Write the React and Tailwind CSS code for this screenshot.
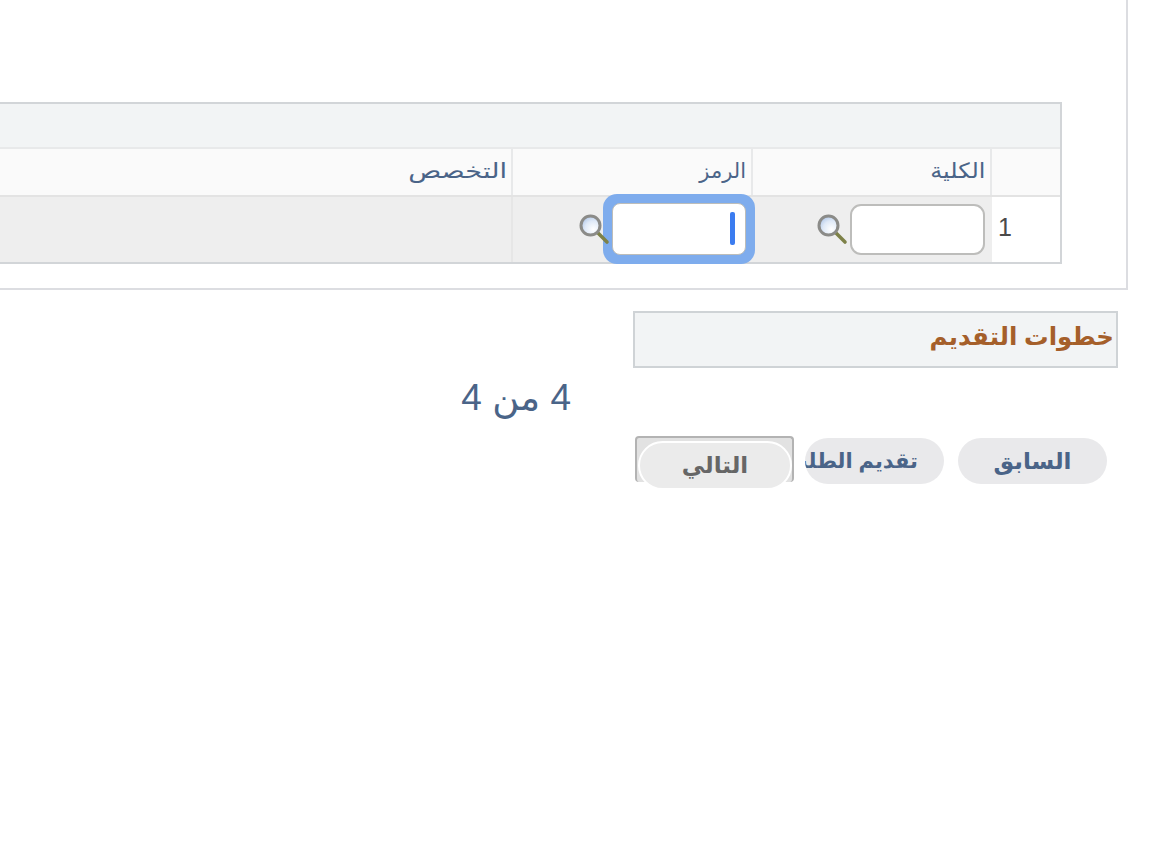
import React from "react";

const arabic = "font-['Liberation_Sans','DejaVu_Sans',sans-serif]";

function Magnifier({ className }) {
  return (
    <svg viewBox="0 0 32 32" className={className} aria-hidden="true">
      <defs>
        <radialGradient id="lens" cx="0.65" cy="0.7" r="0.8">
          <stop offset="0" stopColor="#ffffff" />
          <stop offset="0.55" stopColor="#dfe9f7" />
          <stop offset="1" stopColor="#a9c2e6" />
        </radialGradient>
      </defs>
      <path d="M19.5 19.5 L29 29" stroke="#7d8148" strokeWidth="3.6" strokeLinecap="round" />
      <circle cx="12.5" cy="12.5" r="9.5" fill="url(#lens)" stroke="#8b8b88" strokeWidth="3" />
    </svg>
  );
}

function SearchField({ focused }) {
  return (
    <div className={focused ? "relative z-10 ml-[2px] -mt-[2px] flex w-full shrink-0 items-center" : "-mt-[1px] flex w-full items-center gap-[2px] pr-[7px]"} dir="rtl">
      {focused ? (
        <div className="h-[70px] w-[152px] shrink-0 rounded-[14px] bg-[#7eaced] p-[9px]">
          <div className="flex h-full items-center rounded-[8px] border border-[#bdbdb9] bg-white pr-[10px]">
            <div className="h-[33px] w-[5px] rounded-[2px] bg-[#3b7cf0]" />
          </div>
        </div>
      ) : (
        <div className="h-[51px] w-[135px] shrink-0 rounded-[11px] border-2 border-[#bdbdbb] bg-white" />
      )}
      <Magnifier className={focused ? "-mr-[7px] h-[32px] w-[32px]" : "h-[32px] w-[32px]"} />
    </div>
  );
}

export default function App() {
  return (
    <div className="h-[868px] w-[1170px] overflow-hidden bg-white">
      <div className="ml-[-20px] mr-[42px] mt-[-20px] h-[310px] border-2 border-[#dcdde1] pr-[64px] pt-[120px]">
        <div className="border-2 border-[#d2d5d8] bg-white">
          <div className="h-[43px] bg-[#f2f4f5]" />
          <div className={`grid h-[48px] grid-cols-[1fr_240px_239px_68px] border-t-2 border-[#e8e9ea] bg-[#fafafa] text-[#4a6488] ${arabic}`}>
            <div className="flex items-center border-r-2 border-[#e8e9ea] pb-[3px] pr-[4px] text-[21px]" dir="rtl">
              <span className="inline-block origin-right scale-x-[1.3]">التخصص</span>
            </div>
            <div className="flex items-center border-r-2 border-[#e8e9ea] pb-[3px] pr-[5px] text-[21px]" dir="rtl">الرمز</div>
            <div className="flex items-center border-r-2 border-[#e8e9ea] pb-[3px] pr-[5px] text-[21px]" dir="rtl">
              <span className="inline-block origin-right scale-x-[1.14]">الكلية</span>
            </div>
            <div />
          </div>
          <div className="grid h-[67px] grid-cols-[1fr_240px_239px_68px] grid-rows-[65px] border-t-2 border-[#e3e3e3] bg-[#eeeeee]">
            <div className="border-r-2 border-[#e6e6e6]" />
            <div className="flex items-center"><SearchField focused /></div>
            <div className="flex items-center"><SearchField /></div>
            <div className="flex items-center bg-white pb-[3px] pl-[6px] font-['Liberation_Sans',sans-serif] text-[25px] text-[#4a4a4a]">1</div>
          </div>
        </div>
      </div>

      <div className="ml-[633px] mr-[52px] mt-[21px] flex h-[57px] items-center border-2 border-[#cfd3d6] bg-[#f2f4f5] pb-[4px] pr-[2px]" dir="rtl">
        <span className={`${arabic} text-[24.5px] font-bold text-[#a55f2a]`}>خطوات التقديم</span>
      </div>

      <div className="mr-[599px] mt-[7px] flex h-[44px] items-center justify-end">
        <span className={`${arabic} text-[37px] leading-none text-[#4a6488]`} dir="rtl">4 من 4</span>
      </div>

      <div className="ml-[635px] mt-[17px] flex items-start" dir="rtl">
        <div className="mr-[63px] mt-[2px] flex h-[46px] w-[149px] items-center justify-center rounded-full bg-[#e9e9eb] text-[#4a6488]">
          <span className={`${arabic} text-[23px] font-bold`}>السابق</span>
        </div>
        <div className="mr-[14px] mt-[2px] flex h-[46px] w-[139px] items-center overflow-hidden rounded-full bg-[#e9e9eb] pr-[26px] text-[#4a6488]">
          <span className={`${arabic} whitespace-nowrap text-[21px] font-bold`}>تقديم الطلب</span>
        </div>
        <div className="relative mr-[11px] h-[46px] w-[159px] shrink-0 rounded-[4px] border-2 border-b-0 border-[#b3b3b3] bg-[#e2e2e2]">
          <div className="absolute left-[1px] top-[3px] flex h-[49px] w-[154px] items-center justify-center rounded-full border-2 border-white bg-[#ebebeb] text-[#666666]">
            <span className={`${arabic} text-[23px] font-bold`}>التالي</span>
          </div>
        </div>
      </div>
    </div>
  );
}
